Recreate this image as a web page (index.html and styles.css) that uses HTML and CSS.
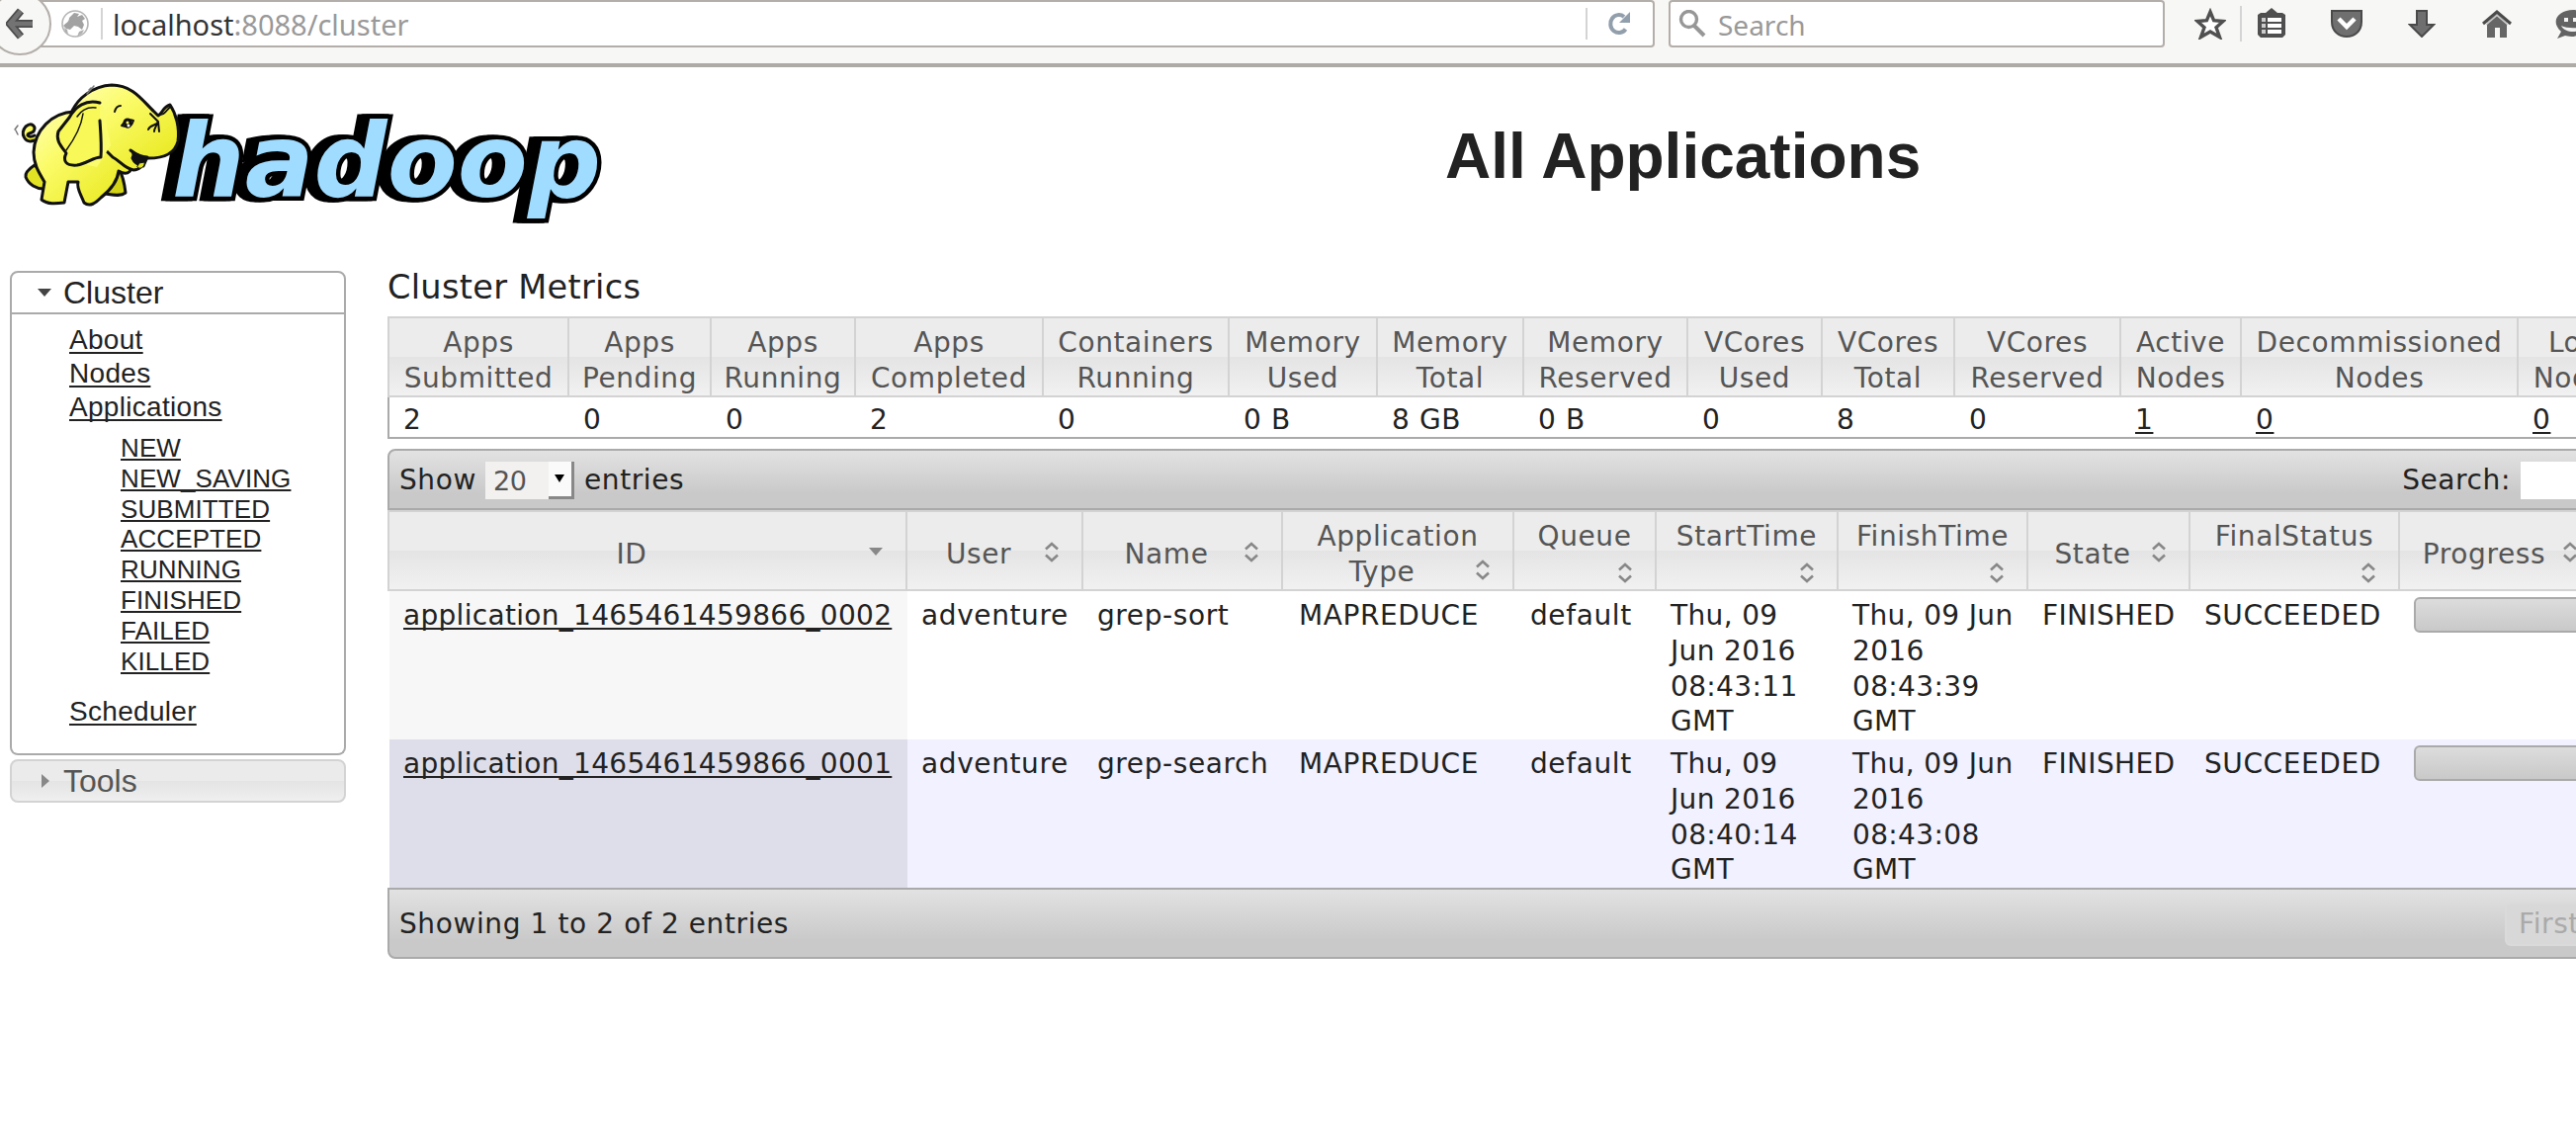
FILE: index.html
```html
<!DOCTYPE html>
<html lang="en">
<head>
<meta charset="utf-8">
<title>All Applications</title>
<link rel="stylesheet" href="styles.css">
</head>
<body>
<div class="chrome">
  <div class="back">
    <svg width="28" height="32" viewBox="0 0 28 32"><path d="M15 3 4 16l11 13M4 16h23" fill="none" stroke="#4c4c4c" stroke-width="8"/><path d="M15 3 4 16l11 13M4 16h23" fill="none" stroke="#737373" stroke-width="4.500"/></svg>
  </div>
  <div class="urlbar">
    <svg class="globe" width="28" height="28" viewBox="0 0 28 28"><circle cx="14" cy="14" r="13" fill="#fff" stroke="#b5b5b5" stroke-width="1.600"/><path d="M2 16C5 13 8 12 8 8l5-5 5 1-2 3 5-2 3 4-3 2 2 4-2 5-4-3-4-1-4 4-4-1z" fill="#a2a2a2"/><path d="M16 27l2-5 5-2-2 4zM3 18l3 2 1 5-3-3z" fill="#b0b0b0"/></svg>
    <span class="sep"></span>
    <span class="url"><b>localhost</b>:8088/cluster</span>
    <span class="sep reload-sep"></span>
    <svg class="reload" width="24" height="24" viewBox="0 0 24 24"><path d="M18.500 17.500A8.500 9 0 1 1 17 5" fill="none" stroke="#919eab" stroke-width="4"/><path d="M23 0v11H12z" fill="#919eab"/></svg>
  </div>
  <div class="searchbar">
    <svg width="28" height="28" viewBox="0 0 28 28"><circle cx="10.500" cy="9.500" r="8" fill="none" stroke="#979797" stroke-width="3.400"/><path d="M16 16l10 10" stroke="#979797" stroke-width="4"/></svg>
    <span>Search</span>
  </div>
  <div class="tools">
    <svg class="t-star" width="32" height="32" viewBox="0 0 32 32"><path d="M16 4l3.600 8.600 9.400.900-7 6.200 3.500 9.800L16 24l-9.500 5.500L10 19.700 3 13.500l9.400-.900z" fill="#fff" stroke="#505050" stroke-width="3.400"/></svg>
    <span class="sep tall"></span>
    <svg class="t-clip" width="28" height="30" viewBox="0 0 28 30"><path d="M0 7 3 5h5l6-5 6 5h5l3 2v20l-3 3H3l-3-3z" fill="#4f4f4f"/><path d="M4 10h4v4H4zm0 6h4v4H4zm0 6h4v4H4z" fill="#ccc"/><path d="M10 10h14v4H10zm0 6h14v4H10zm0 6h14v4H10z" fill="#fff"/></svg>
    <svg class="t-pocket" width="32" height="28" viewBox="0 0 32 28"><path d="M1 1h30v11c0 20-30 20-30 0z" fill="#6f6f6f" stroke="#4a4a4a" stroke-width="2"/><path d="M8 9l8 8 8-8" fill="none" stroke="#fff" stroke-width="4.500"/></svg>
    <svg class="t-down" width="28" height="28" viewBox="0 0 28 28"><path d="M9 1h10v14h7L14 27 2 15h7z" fill="#6f6f6f" stroke="#4a4a4a" stroke-width="2"/></svg>
    <svg class="t-home" width="32" height="28" viewBox="0 0 32 28"><path d="M6 13 16 4l10 9v15h-7V18h-5v10H6z" fill="#666"/><path d="M2 14 16 2l14 12" fill="none" stroke="#4a4a4a" stroke-width="3"/><path d="M5 15 16 5.500 27 15" fill="none" stroke="#ccc" stroke-width="1.500"/></svg>
    <svg class="t-chat" width="36" height="32" viewBox="0 0 36 32"><path d="M6 23C-6 12 4 1 18 1s20 14 10 22-15 4-18 4l-8 3z" fill="#636363"/><path d="M9 9h4v4H9zm9 0h4v4h-4zM6 17c4 8 20 8 24 0-6 3-18 3-24 0z" fill="#f4f4f4"/></svg>
  </div>
</div>

<div class="masthead">
  <svg class="logo" width="620" height="160" viewBox="0 76 620 160">
    <defs><linearGradient id="skin" x1="0" y1="0" x2="1" y2="1"><stop offset="0" stop-color="#ffffb0"/><stop offset=".35" stop-color="#fbfb6a"/><stop offset="1" stop-color="#e6e614"/></linearGradient></defs>
    <text class="wordmark" x="174" y="199" textLength="434" lengthAdjust="spacingAndGlyphs">hadoop</text>
    <g stroke="#111" stroke-width="3" stroke-linejoin="round" stroke-linecap="round" fill="url(#skin)">
      <path d="M35 142c-10 4-15-7-9-14 6-5 11 0 8 5-4 3-6 1-6 4 2 2 5 1 7 0"/>
      <path d="M35 167c-6 4-10 8-9 12 3 8 11 12 18 12l3-12z" fill="#e2e224"/>
      <path d="M120 170c5 9 6 16 7 25-5 4-13 2-20 1z" fill="#d4d417"/>
      <path d="M75 113C52 114 35 132 34 154c0 12 5 20 11 30l-3 18c6 5 15 4 23 3l4-21h10c-2 6 3 13 6 21 6 5 12 0 17-5 10-8 17-17 18-27 10 6 15-1 14-11z"/>
      <path d="M73 112c6-12 20-25 40-26 22 0 32 17 43 27l4 4c4-2 5-9 12-11 6 9 10 23 8 37-3 12-14 18-34 17-3 8-4 12-11 12-10-2-13-9-21-13l-20-20z"/>
      <path d="M72 114l10-9 22 2 8 40-14 22-28-6z" fill="#fbfb6e" stroke="none"/>
      <path d="M134 160c2-4 1-6-2-8 8 6 12 7 17 7l-4 9c-5-1-9-3-11-8z" fill="#111"/>
      <path d="M139 169c4 4 8-2 7-5l-5 1z" fill="#e2e224" stroke-width="1"/>
      <path d="M101 104c-14-4-25 4-31 15l-11 14c-3 9 3 15 8 22-4 8 0 13 11 12 10-2 17-8 24-8 1-11 0-23-1-37" fill="#f8f858"/>
      <path d="M78 118c4-6 11-10 19-9M84 115c-2 14-9 26-17 37" fill="none" stroke-width="1.500"/>
      <path d="M116 113c1-4 3-6 6-6M152 115l8 8c-1 4-8 3-10 8m10-8c-2 5-4 7-4 10m4-10 1 10" fill="none" stroke-width="2"/>
      <path d="M123 127c3-4 7-7 12-5-2 6-5 8-8 6z" stroke-width="2"/><circle cx="129" cy="124" r="3"/><circle cx="130" cy="127" r="1.500" fill="#fff" stroke="none"/>
      <path d="M162 116c6 0 7-7 11-8" fill="none" stroke-width="2"/>
      <path d="M15 131l3-4m0 9-2-4m72-37 7-8m-5 4 2-2" fill="none" stroke="#777" stroke-width="1.500"/>
    </g>
  </svg>
  <h1>All Applications</h1>
</div>

<div class="page">
  <nav class="sidebar">
    <div class="acc-head open"><svg width="14" height="8"><path d="M0 0h14L7 8z" fill="#444"/></svg>Cluster</div>
    <div class="acc-body">
      <a>About</a><a>Nodes</a><a>Applications</a>
      <div class="states"><a>NEW</a><a>NEW_SAVING</a><a>SUBMITTED</a><a>ACCEPTED</a><a>RUNNING</a><a>FINISHED</a><a>FAILED</a><a>KILLED</a></div>
      <a>Scheduler</a>
    </div>
    <div class="acc-head closed"><svg width="14" height="14"><path d="M4 0v14l8-7z" fill="#888"/></svg>Tools</div>
  </nav>

  <main class="content">
    <h2>Cluster Metrics</h2>
    <table class="metrics">
      <colgroup><col style="width:182px"><col style="width:144px"><col style="width:146px"><col style="width:190px"><col style="width:188px"><col style="width:150px"><col style="width:148px"><col style="width:166px"><col style="width:136px"><col style="width:134px"><col style="width:168px"><col style="width:122px"><col style="width:280px"><col style="width:122px"></colgroup>
      <thead><tr><th>Apps<br>Submitted</th><th>Apps<br>Pending</th><th>Apps<br>Running</th><th>Apps<br>Completed</th><th>Containers<br>Running</th><th>Memory<br>Used</th><th>Memory<br>Total</th><th>Memory<br>Reserved</th><th>VCores<br>Used</th><th>VCores<br>Total</th><th>VCores<br>Reserved</th><th>Active<br>Nodes</th><th>Decommissioned<br>Nodes</th><th>Lost<br>Nodes</th></tr></thead>
      <tbody><tr><td>2</td><td>0</td><td>0</td><td>2</td><td>0</td><td>0 B</td><td>8 GB</td><td>0 B</td><td>0</td><td>8</td><td>0</td><td><a>1</a></td><td><a>0</a></td><td><a>0</a></td></tr></tbody>
    </table>

    <div class="bar top">
      <span>Show</span><span class="select"><span>20</span><i><svg width="10" height="8"><path d="M0 0h10L5 8z"/></svg></i></span><span>entries</span>
      <span class="find">Search:</span><span class="input"></span>
    </div>

    <table class="apps">
      <colgroup><col style="width:524px"><col style="width:178px"><col style="width:202px"><col style="width:234px"><col style="width:144px"><col style="width:184px"><col style="width:192px"><col style="width:164px"><col style="width:212px"><col style="width:204px"></colgroup>
      <thead><tr>
        <th><svg class="sort" viewBox="0 0 32 32"><path class="down" d="M9 11h14l-7 8z"/></svg>ID</th>
        <th><svg class="sort" viewBox="0 0 32 32"><path d="M10 12.500l6-5.500 6 5.500M10 18.500l6 5.500 6-5.500"/></svg>User</th>
        <th><svg class="sort" viewBox="0 0 32 32"><path d="M10 12.500l6-5.500 6 5.500M10 18.500l6 5.500 6-5.500"/></svg>Name</th>
        <th>Application<br><svg class="sort" viewBox="0 0 32 32"><path d="M10 12.500l6-5.500 6 5.500M10 18.500l6 5.500 6-5.500"/></svg>Type</th>
        <th class="drop">Queue<svg class="sort" viewBox="0 0 32 32"><path d="M10 12.500l6-5.500 6 5.500M10 18.500l6 5.500 6-5.500"/></svg></th>
        <th class="drop">StartTime<svg class="sort" viewBox="0 0 32 32"><path d="M10 12.500l6-5.500 6 5.500M10 18.500l6 5.500 6-5.500"/></svg></th>
        <th class="drop">FinishTime<svg class="sort" viewBox="0 0 32 32"><path d="M10 12.500l6-5.500 6 5.500M10 18.500l6 5.500 6-5.500"/></svg></th>
        <th><svg class="sort" viewBox="0 0 32 32"><path d="M10 12.500l6-5.500 6 5.500M10 18.500l6 5.500 6-5.500"/></svg>State</th>
        <th class="drop">FinalStatus<svg class="sort" viewBox="0 0 32 32"><path d="M10 12.500l6-5.500 6 5.500M10 18.500l6 5.500 6-5.500"/></svg></th>
        <th><svg class="sort" viewBox="0 0 32 32"><path d="M10 12.500l6-5.500 6 5.500M10 18.500l6 5.500 6-5.500"/></svg>Progress</th>
      </tr></thead>
      <tbody>
        <tr class="odd"><td><a>application_1465461459866_0002</a></td><td>adventure</td><td>grep-sort</td><td class="type">MAPREDUCE</td><td class="type">default</td><td class="time">Thu, 09<br>Jun 2016<br>08:43:11<br>GMT</td><td class="time">Thu, 09 Jun<br>2016<br>08:43:39<br>GMT</td><td class="time">FINISHED</td><td>SUCCEEDED</td><td class="bar-cell"><div class="progress"></div></td></tr>
        <tr class="even"><td><a>application_1465461459866_0001</a></td><td>adventure</td><td>grep-search</td><td class="type">MAPREDUCE</td><td class="type">default</td><td class="time">Thu, 09<br>Jun 2016<br>08:40:14<br>GMT</td><td class="time">Thu, 09 Jun<br>2016<br>08:43:08<br>GMT</td><td class="time">FINISHED</td><td>SUCCEEDED</td><td class="bar-cell"><div class="progress"></div></td></tr>
      </tbody>
    </table>

    <div class="bar bottom"><span>Showing 1 to 2 of 2 entries</span><span class="first">First</span></div>
  </main>
</div>
</body>
</html>
```
FILE: styles.css
```css
* { box-sizing: border-box; }
body {
  margin: 0;
  height: 1134px;
  overflow: hidden;
  background: #fff;
  color: #222;
  font: 28px/36px "DejaVu Sans", sans-serif;
}
svg { display: block; flex: none; }

/* browser toolbar */
.chrome {
  position: relative;
  display: flex;
  height: 68px;
  background: #f7f7f5;
  border-bottom: 4px solid #aeaaa6;
  font-family: "Noto Sans", sans-serif;
  overflow: hidden;
}
.back {
  position: absolute;
  left: -12px;
  top: -8px;
  width: 64px;
  height: 64px;
  border: 2px solid #b3aeaa;
  border-radius: 50%;
  background: #f7f7f5;
  padding: 14px 0 0 16px;
}
.urlbar, .searchbar {
  display: flex;
  flex: none;
  align-items: center;
  height: 48px;
  border: 2px solid #b3aeaa;
  background: #fff;
  color: #999;
}
.urlbar { width: 1674px; border-left: 0; border-radius: 0 4px 4px 0; padding-left: 62px; }
.searchbar { width: 502px; margin-left: 14px; border-radius: 4px; padding-left: 8px; font-size: 28px; }
.searchbar span { margin: 1px 0 0 12px; }
.sep { width: 2px; height: 32px; background: #d4d4d4; margin-left: 12px; }
.url { margin: 1px 0 0 10px; font-size: 29px; white-space: nowrap; }
.url b { font-weight: 400; color: #333; }
.reload-sep { margin-left: auto; }
.reload { margin: 0 22px 0 20px; }
.tools { display: flex; flex: none; align-items: flex-start; padding-left: 30px; }
.t-star { margin-top: 8px; }
.tall { height: 36px; margin: 6px 0 0 14px; }
.t-clip { margin: 8px 0 0 16px; }
.t-pocket { margin: 10px 0 0 46px; }
.t-down { margin: 10px 0 0 46px; }
.t-home { margin: 10px 0 0 46px; }
.t-chat { margin: 9px 0 0 43px; }

/* page header */
.masthead { display: flex; align-items: flex-start; height: 206px; padding-top: 8px; }
.wordmark {
  font: italic 700 104px "DejaVu Sans", sans-serif;
  fill: #9fdcff;
  stroke: #000;
  stroke-width: 9px;
  stroke-linejoin: miter;
  paint-order: stroke;
  filter: drop-shadow(-4px 0 0 #000) drop-shadow(-5px 0 0 #000);
}
h1 {
  margin: 46px 0 0 842px;
  font: 700 64px/72px "Liberation Sans", sans-serif;
  white-space: nowrap;
}

.page { display: flex; align-items: flex-start; padding-left: 10px; }
a { text-decoration: underline; text-decoration-thickness: 2px; text-underline-offset: 3px; text-decoration-skip-ink: none; }

/* accordion menu */
.sidebar { width: 340px; flex: none; font-family: "Liberation Sans", sans-serif; }
.acc-head {
  display: flex;
  align-items: center;
  height: 44px;
  padding-left: 26px;
  border: 2px solid #aaa;
  border-radius: 8px 8px 0 0;
  font-size: 32px;
}
.acc-head svg { margin-right: 12px; }
.closed {
  margin-top: 4px;
  border-color: #d3d3d3;
  border-radius: 8px;
  background: linear-gradient(#ebebeb 50%, #e4e4e4 50%, #efefef);
  color: #555;
}
.acc-body {
  height: 446px;
  padding: 9px 0 0 58px;
  border: 2px solid #aaa;
  border-top: 0;
  border-radius: 0 0 8px 8px;
  font-size: 28px;
  line-height: 34px;
  letter-spacing: .3px;
}
.acc-body a { display: table; }
.states { margin: 9px 0 19px 52px; font-size: 26px; line-height: 30.8px; letter-spacing: .1px; }
.states a { text-underline-offset: 2px; }

/* tables */
.content { margin-left: 42px; width: 2276px; flex: none; letter-spacing: .6px; }
h2 { margin: 0; height: 46px; padding-top: 1px; font-size: 33.6px; font-weight: 400; line-height: 32px; letter-spacing: .3px; }
table { table-layout: fixed; border-collapse: separate; border-spacing: 0; margin-left: 2px; white-space: nowrap; }
.metrics { width: 2276px; }
.apps { width: 2238px; }
th {
  height: 82px;
  padding: 7px 14px 0;
  border: solid #d3d3d3;
  border-width: 2px 2px 2px 0;
  background: linear-gradient(#ececec 50%, #e4e4e4 50%, #f1f1f1);
  color: #555;
  font-weight: 400;
  line-height: 35.5px;
  text-align: center;
}
.metrics th { padding: 7px 0 0; }
th:first-child { box-shadow: -2px 0 #d3d3d3; }
td { padding: 7px 14px 0; vertical-align: top; line-height: 35.75px; }
td:first-child { letter-spacing: .3px; }
.type { padding-left: 16px; }
.time { letter-spacing: .35px; }
.metrics td { height: 42px; padding: 5px 0 0 14px; line-height: 35px; border-bottom: 2px solid #aaa; }
.metrics td:first-child { box-shadow: -2px 0 #aaa; }
.sort { float: right; width: 32px; height: 32px; fill: none; stroke: #888; stroke-width: 2.6px; }
.sort .down { fill: #888; stroke: none; }
.drop .sort { float: none; margin: 3px 0 0 auto; }
.odd td:first-child { background: #f7f7f7; }
.even { background: #f1f1ff; }
.even td:first-child { background: #dedeea; }
.bar-cell { padding-top: 6px; }
.progress {
  height: 36px;
  border: 2px solid #aaa;
  border-radius: 6px;
  background: linear-gradient(#dcdcdc, #c9c9c9);
}

.bar {
  display: flex;
  align-items: center;
  border: 2px solid #aaa;
  background: linear-gradient(#e2e2e2, #c9c9c9 75%);
  padding: 1px 0 0 10px;
}
.top { height: 62px; margin-top: 10px; border-radius: 8px 0 0 0; }
.bottom { height: 72px; border-radius: 0 0 0 8px; }
.select { display: flex; flex: none; width: 90px; height: 38px; margin: 0 10px 0 9px; padding-left: 8px; background: #f2f1f0; color: #555; font-size: 27px; line-height: 40px; letter-spacing: -.5px; }
.select i { display: flex; align-items: center; justify-content: center; width: 26px; height: 38px; margin-left: auto; border: 3px solid #888; border-width: 0 3px 3px 0; background: #fafafa; }
.find { margin-left: auto; }
.input { flex: none; width: 116px; height: 38px; margin-left: 10px; background: #fff; }
.first { flex: none; width: 132px; height: 44px; margin-left: auto; padding: 2px 12px; border: 2px solid #dadada; border-radius: 6px; background: #d8d8d8; color: #aaa; }
```
